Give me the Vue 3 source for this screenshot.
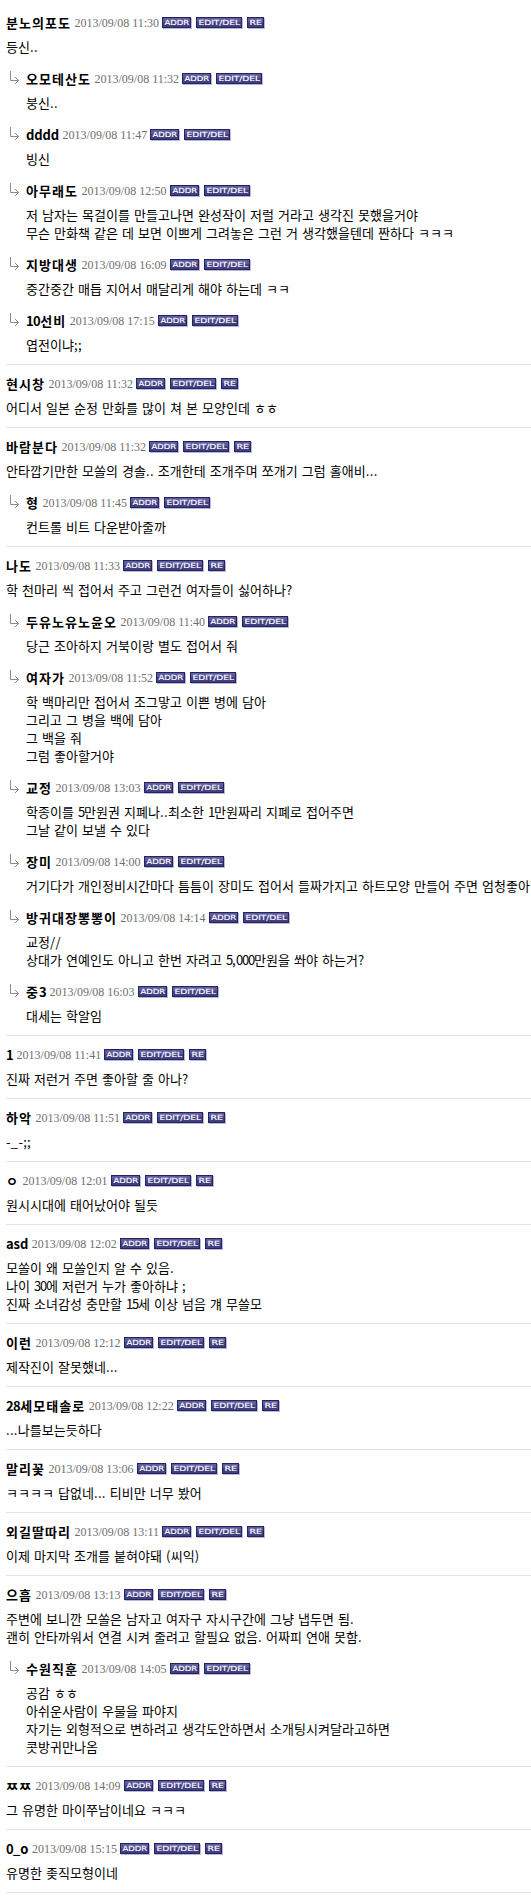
<template>
  <main class="comments">
    <article v-for="(thread, t) in threads" :key="t" class="thread">
      <section
        v-for="(post, p) in thread"
        :key="p"
        class="post"
        :class="{ reply: p > 0 }"
      >
        <svg v-if="p > 0" class="arrow" width="10" height="14" viewBox="0 0 10 14">
          <path d="M0.5 0V9.5H8.5M5 6L8.5 9.5L5 13" />
        </svg>
        <header class="head">
          <strong class="name">
            <span v-for="(run, i) in runs(post.name)" :key="i" :class="run.type">{{ run.text }}</span>
          </strong>
          <span class="date">2013/09/08 {{ post.time }}</span>
          <span class="buttons">
            <svg
              v-for="btn in p > 0 ? buttons.slice(0, 2) : buttons"
              :key="btn.label"
              class="button"
              :width="btn.width"
              height="12"
            >
              <rect class="shadow" x="1" y="1" :width="btn.width - 1" height="11" />
              <rect class="edge" :width="btn.width - 1" height="11" />
              <rect class="light" x="1" y="1" :width="btn.width - 3" height="4" />
              <rect class="face" x="1" y="5" :width="btn.width - 3" height="5" />
              <text x="2.5" y="8" :textLength="btn.width - 5.5" lengthAdjust="spacingAndGlyphs">{{ btn.label }}</text>
            </svg>
          </span>
        </header>
        <p v-for="(line, l) in post.lines" :key="l" class="line">
          <span v-for="(run, i) in runs(line)" :key="i" :class="run.type">{{ run.text }}</span>
        </p>
      </section>
    </article>
  </main>
</template>

<script setup>
const buttons = [
  { label: 'ADDR', width: 30 },
  { label: 'EDIT/DEL', width: 47 },
  { label: 'RE', width: 18 }
];

const post = (name, time, ...lines) => ({ name, time, lines });

const threads = [
  [
    post('분노의포도', '11:30', '등신..'),
    post('오모테산도', '11:32', '붕신..'),
    post('dddd', '11:47', '빙신'),
    post(
      '아무래도',
      '12:50',
      '저 남자는 목걸이를 만들고나면 완성작이 저럴 거라고 생각진 못했을거야',
      '무슨 만화책 같은 데 보면 이쁘게 그려놓은 그런 거 생각했을텐데 짠하다 ㅋㅋㅋ'
    ),
    post('지방대생', '16:09', '중간중간 매듭 지어서 매달리게 해야 하는데 ㅋㅋ'),
    post('10선비', '17:15', '엽전이냐;;')
  ],
  [post('현시창', '11:32', '어디서 일본 순정 만화를 많이 쳐 본 모양인데 ㅎㅎ')],
  [
    post('바람분다', '11:32', '안타깝기만한 모쏠의 경솔.. 조개한테 조개주며 쪼개기 그럼 홀애비...'),
    post('형', '11:45', '컨트롤 비트 다운받아줄까')
  ],
  [
    post('나도', '11:33', '학 천마리 씩 접어서 주고 그런건 여자들이 싫어하나?'),
    post('두유노유노윤오', '11:40', '당근 조아하지 거북이랑 별도 접어서 줘'),
    post('여자가', '11:52', '학 백마리만 접어서 조그맣고 이쁜 병에 담아', '그리고 그 병을 백에 담아', '그 백을 줘', '그럼 좋아할거야'),
    post('교정', '13:03', '학종이를 5만원권 지폐나..최소한 1만원짜리 지폐로 접어주면', '그날 같이 보낼 수 있다'),
    post('장미', '14:00', '거기다가 개인정비시간마다 틈틈이 장미도 접어서 들짜가지고 하트모양 만들어 주면 엄청좋아할'),
    post('방귀대장뽕뽕이', '14:14', '교정//', '상대가 연예인도 아니고 한번 자려고 5,000만원을 쏴야 하는거?'),
    post('중3', '16:03', '대세는 학알임')
  ],
  [post('1', '11:41', '진짜 저런거 주면 좋아할 줄 아나?')],
  [post('하악', '11:51', '-_-;;')],
  [post('ㅇ', '12:01', '원시시대에 태어났어야 될듯')],
  [post('asd', '12:02', '모쏠이 왜 모쏠인지 알 수 있음.', '나이 30에 저런거 누가 좋아하냐 ;', '진짜 소녀감성 충만할 15세 이상 넘음 걔 무쓸모')],
  [post('이런', '12:12', '제작진이 잘못했네...')],
  [post('28세모태솔로', '12:22', '...나를보는듯하다')],
  [post('말리꽃', '13:06', 'ㅋㅋㅋㅋ 답없네... 티비만 너무 봤어')],
  [post('외길딸따리', '13:11', '이제 마지막 조개를 붙혀야돼 (씨익)')],
  [
    post('으흠', '13:13', '주변에 보니깐 모쏠은 남자고 여자구 자시구간에 그냥 냅두면 됨.', '괜히 안타까워서 연결 시켜 줄려고 할필요 없음. 어짜피 연애 못함.'),
    post('수원직훈', '14:05', '공감 ㅎㅎ', '아쉬운사람이 우물을 파야지', '자기는 외형적으로 변하려고 생각도안하면서 소개팅시켜달라고하면', '콧방귀만나옴')
  ],
  [post('ㅉㅉ', '14:09', '그 유명한 마이쭈남이네요 ㅋㅋㅋ')],
  [post('0_o', '15:15', '유명한 좆직모형이네')]
];

// Hangul, digits and punctuation are spaced differently
function runs(text) {
  return text
    .split(/([0-9]+|[!-/:-~]+)/)
    .filter(Boolean)
    .map((part) => ({
      text: part,
      type: /^[0-9]/.test(part) ? 'digit' : /^[!-~]/.test(part) ? 'latin' : 'hangul'
    }));
}
</script>

<style>
body {
  margin: 0;
  background: #fff;
}
</style>

<style scoped>
.comments {
  height: 1896px;
  padding: 4px 0 0 6px;
  overflow: hidden;
  color: #000;
  font-family: "Noto Sans CJK KR", "Liberation Sans", sans-serif;
}

.thread {
  padding: 10px 0 9px;
  border-bottom: 1px solid #e3e3e3;
}

.post {
  position: relative;
  padding-bottom: 1px;
}

.reply {
  margin-top: 13px;
  padding-left: 20px;
}

.arrow {
  position: absolute;
  top: 1px;
  left: 4px;
  fill: none;
  stroke: #8c8c8c;
}

.head {
  display: flex;
  height: 18px;
  margin-bottom: 6px;
  line-height: 18px;
  white-space: nowrap;
}

.name {
  font-size: 13px;
  font-weight: 700;
  line-height: 17px;
}

.name .hangul {
  letter-spacing: 1.04px;
}

.name .digit {
  letter-spacing: -0.6px;
}

.name .latin {
  letter-spacing: -0.1px;
}

.date {
  margin-left: 3.5px;
  color: #707070;
  font-family: "Liberation Serif", serif;
  font-size: 12px;
}

.buttons {
  display: flex;
  gap: 4px;
  margin-left: 3px;
  padding-top: 3px;
}

.button {
  display: block;
}

.shadow {
  fill: #b9b9dc;
}

.edge {
  fill: #252362;
}

.light {
  fill: #5d5b9b;
}

.face {
  fill: #42407f;
}

.button text {
  fill: #fff;
  stroke: #fff;
  stroke-width: 0.15px;
  font-family: "DejaVu Sans", sans-serif;
  font-size: 7px;
}

.line {
  height: 18px;
  margin: 0;
  font-size: 13px;
  line-height: 18px;
  white-space: pre;
}

.line .hangul {
  letter-spacing: 0.04px;
  word-spacing: 1.05px;
}

.line .latin {
  letter-spacing: 0.3px;
}

.line .digit {
  letter-spacing: -1.2px;
}
</style>
